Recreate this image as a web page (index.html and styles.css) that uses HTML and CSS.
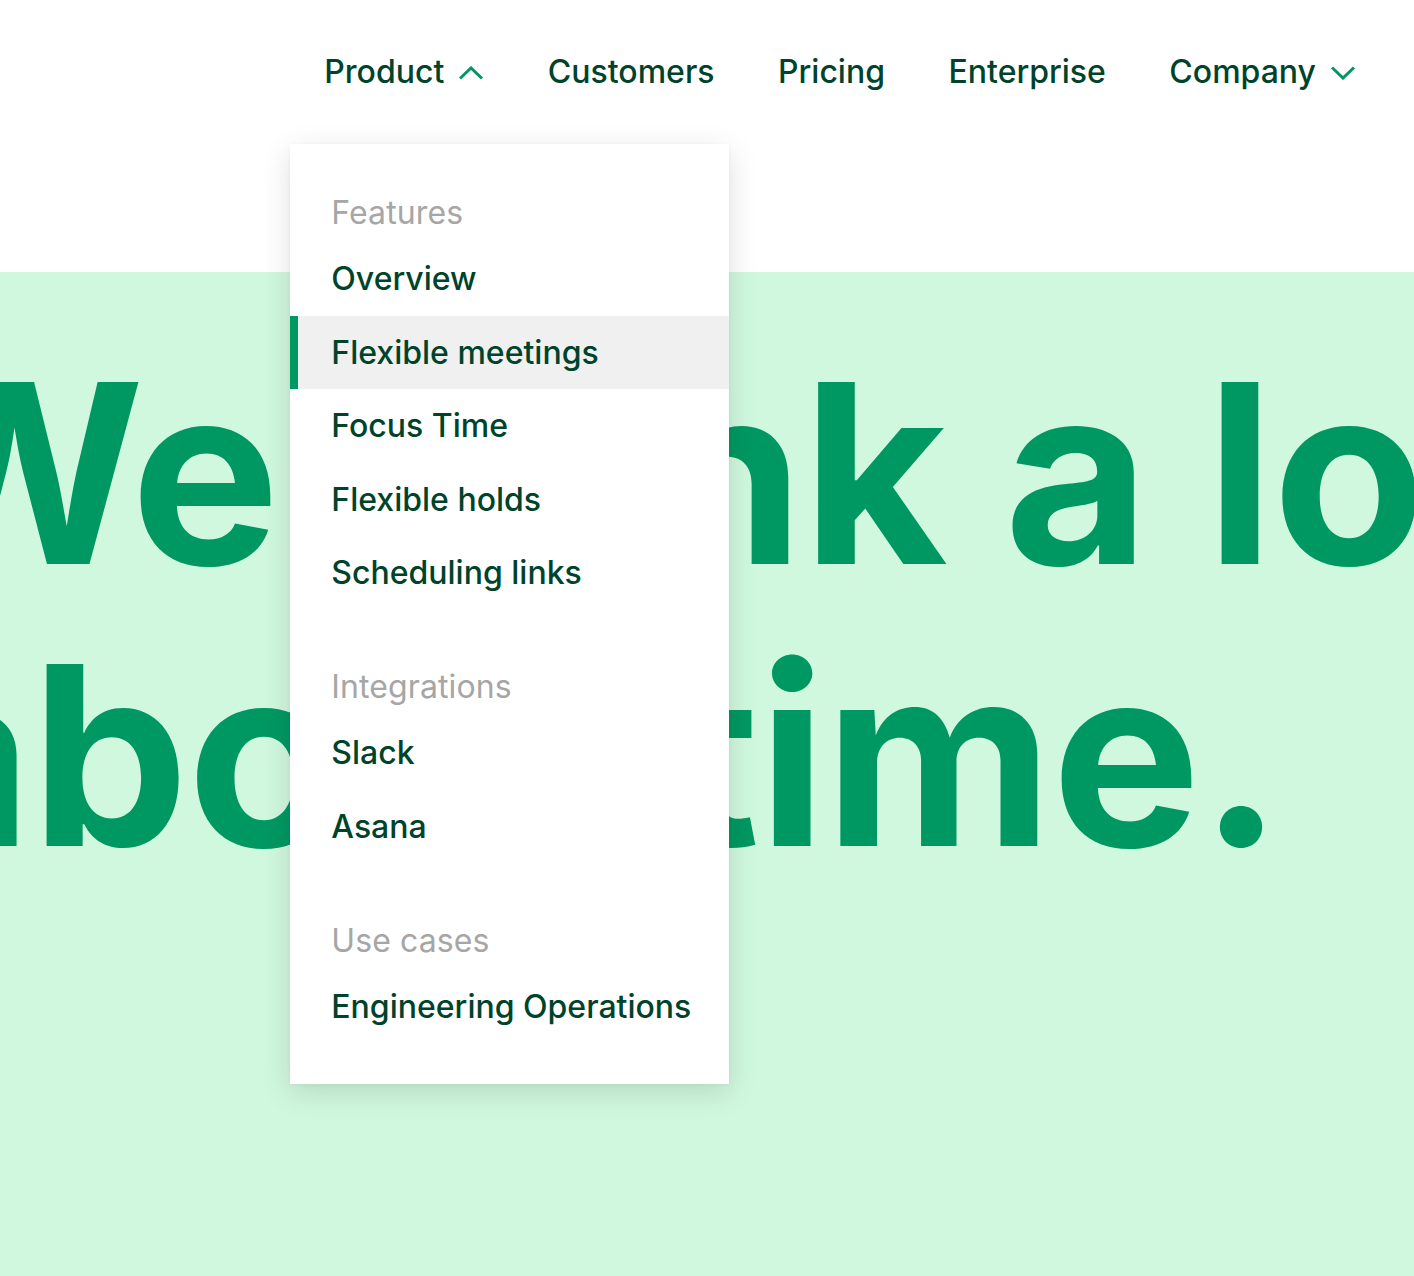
FILE: index.html
```html
<!DOCTYPE html>
<html lang="en">
<head>
<meta charset="utf-8">
<title>We think a lot about time.</title>
<link rel="stylesheet" href="styles.css">
</head>
<body>
<header class="header">
  <nav class="nav">
    <div class="nav-item has-menu">
      <a class="nav-link" href="#">Product
        <svg class="chev" width="26" height="14" viewBox="0 0 26 14"><path d="M2 12.5 L13 2 L24 12.5" fill="none" stroke="#009862" stroke-width="3"/></svg>
      </a>
      <div class="dropdown">
        <div class="group">
          <div class="group-label">Features</div>
          <a class="menu-item" href="#">Overview</a>
          <a class="menu-item active" href="#">Flexible meetings</a>
          <a class="menu-item" href="#">Focus Time</a>
          <a class="menu-item" href="#">Flexible holds</a>
          <a class="menu-item" href="#">Scheduling links</a>
        </div>
        <div class="group">
          <div class="group-label">Integrations</div>
          <a class="menu-item" href="#">Slack</a>
          <a class="menu-item" href="#">Asana</a>
        </div>
        <div class="group">
          <div class="group-label">Use cases</div>
          <a class="menu-item" href="#">Engineering Operations</a>
        </div>
      </div>
    </div>
    <div class="nav-item"><a class="nav-link" href="#">Customers</a></div>
    <div class="nav-item"><a class="nav-link" href="#">Pricing</a></div>
    <div class="nav-item"><a class="nav-link" href="#">Enterprise</a></div>
    <div class="nav-item">
      <a class="nav-link" href="#">Company
        <svg class="chev" width="26" height="14" viewBox="0 0 26 14"><path d="M2 1.5 L13 12 L24 1.5" fill="none" stroke="#009862" stroke-width="3"/></svg>
      </a>
    </div>
  </nav>
</header>
<section class="hero">
  <h1 class="hero-title"><span class="hero-line">We think a lot</span><span class="hero-line hero-line-2">about time.</span></h1>
</section>
</body>
</html>
```

FILE: styles.css
```css
* { box-sizing: border-box; }
html, body { margin: 0; padding: 0; }
body {
  font-family: Inter, "Noto Sans", sans-serif;
  background: #ffffff;
  width: 1414px;
  height: 1276px;
  overflow: hidden;
}
a { text-decoration: none; color: inherit; }

.header {
  height: 272px;
  background: #ffffff;
  position: relative;
  z-index: 5;
}
.nav {
  display: flex;
  justify-content: flex-end;
  align-items: center;
  gap: 63.5px;
  padding: 52px 58px 0 0;
  height: 92px;
}
.nav-item { position: relative; }
.nav-link {
  display: flex;
  align-items: center;
  gap: 14px;
  font-size: 32px;
  line-height: 40px;
  color: #00432b;
  font-weight: 500;
  letter-spacing: 0;
}
.chev { display: block; margin-top: 2px; }

.dropdown {
  position: absolute;
  left: -34px;
  top: 92px;
  width: 439px;
  background: #ffffff;
  padding: 49px 0 40.5px;
  box-shadow: 0 8px 28px rgba(0, 0, 0, 0.13), 0 1px 4px rgba(0, 0, 0, 0.04);
}
.group + .group { margin-top: 57.5px; }
.group-label {
  height: 40px;
  line-height: 40px;
  padding-left: 41px;
  margin-bottom: 9px;
  font-size: 32px;
  color: #a6a6a6;
  font-weight: 400;
  letter-spacing: 0.1px;
}
.menu-item {
  display: flex;
  align-items: center;
  height: 73.5px;
  padding-left: 41px;
  font-size: 32px;
  color: #00432b;
  font-weight: 500;
  letter-spacing: 0;
  white-space: nowrap;
}
.menu-item.active {
  background: #f0f0f0;
  border-left: 8px solid #009862;
  padding-left: 33px;
}

.hero {
  background: #d0f8de;
  height: 1004px;
  padding-top: 60px;
  overflow: hidden;
}
.hero-title {
  margin: 0 0 0 -115px;
  font-size: 250px;
  line-height: 282px;
  font-weight: 700;
  letter-spacing: -0.005em;
  color: #009862;
  white-space: nowrap;
}
.hero-line { display: block; }
.hero-line-2 {
  margin-left: 2px;
  word-spacing: 26px;
}
```
